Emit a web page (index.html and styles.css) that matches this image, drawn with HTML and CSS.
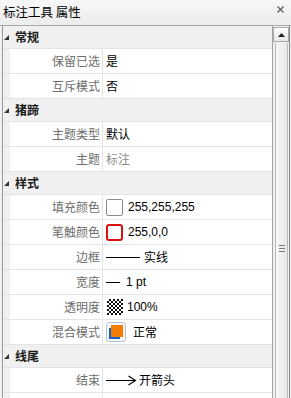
FILE: index.html
```html
<!DOCTYPE html>
<html>
<head>
<meta charset="utf-8">
<link rel="stylesheet" href="styles.css">
</head>
<body>
<div class="win">
  <div class="title">
    <span class="title-text">标注工具 属性</span>
    <svg class="close" width="7" height="7" viewBox="0 0 7 7"><path d="M0.5 0.5L6.5 6.5M6.5 0.5L0.5 6.5" stroke="#555" stroke-width="1.1" fill="none"/></svg>
  </div>
  <div class="main">
    <div class="grid">
      <div class="cat"><svg class="tri" width="5" height="5" viewBox="0 0 5 5"><polygon points="5,0 5,5 0,5" fill="#333"/></svg>常规</div>
      <div class="row"><div class="lbl">保留已选</div><div class="val">是</div></div>
      <div class="row"><div class="lbl">互斥模式</div><div class="val">否</div></div>
      <div class="cat"><svg class="tri" width="5" height="5" viewBox="0 0 5 5"><polygon points="5,0 5,5 0,5" fill="#333"/></svg>猪蹄</div>
      <div class="row"><div class="lbl">主题类型</div><div class="val">默认</div></div>
      <div class="row"><div class="lbl">主题</div><div class="val dis">标注</div></div>
      <div class="cat"><svg class="tri" width="5" height="5" viewBox="0 0 5 5"><polygon points="5,0 5,5 0,5" fill="#333"/></svg>样式</div>
      <div class="row"><div class="lbl">填充颜色</div><div class="val"><span class="sw sw-fill"></span><span class="num">255,255,255</span></div></div>
      <div class="row"><div class="lbl">笔触颜色</div><div class="val"><span class="sw sw-stroke"></span><span class="num">255,0,0</span></div></div>
      <div class="row"><div class="lbl">边框</div><div class="val"><span class="ln ln-long"></span>实线</div></div>
      <div class="row"><div class="lbl">宽度</div><div class="val"><span class="ln ln-short"></span><span class="num">1 pt</span></div></div>
      <div class="row"><div class="lbl">透明度</div><div class="val"><span class="checker"></span><span class="num">100%</span></div></div>
      <div class="row"><div class="lbl">混合模式</div><div class="val"><svg class="blend" width="20" height="20" viewBox="0 0 20 20"><rect x="0.5" y="0.5" width="19" height="19" rx="2" fill="#f3f5f8" stroke="#b9c4d2"/><rect x="3" y="6" width="11" height="11" fill="#1a62c4"/><rect x="5" y="3" width="12" height="12" fill="#f47c00"/></svg>正常</div></div>
      <div class="cat"><svg class="tri" width="5" height="5" viewBox="0 0 5 5"><polygon points="5,0 5,5 0,5" fill="#333"/></svg>线尾</div>
      <div class="row"><div class="lbl">结束</div><div class="val"><svg class="arrow" width="31" height="11" viewBox="0 0 31 11"><path d="M0 5.5H29.5M22.5 1L29.5 5.5L22.5 10" stroke="#000" stroke-width="1.1" fill="none"/></svg>开箭头</div></div>
      <div class="row"><div class="lbl"></div><div class="val"></div></div>
    </div>
    <div class="sb">
      <div class="sb-up"><svg width="7" height="4" viewBox="0 0 7 4"><polygon points="0,4 3.5,0 7,4" fill="#222"/></svg></div>
      <div class="sb-thumb"><span class="grip"></span></div>
    </div>
  </div>
</div>
</body>
</html>
```

FILE: styles.css
```css
html, body {
  margin: 0;
  padding: 0;
}
body {
  font-family: "Noto Sans CJK SC", "Noto Sans", sans-serif;
  font-size: 12px;
  color: #000;
  background: #f0f0f0;
}
.win {
  width: 291px;
  height: 398px;
  overflow: hidden;
  display: flex;
  flex-direction: column;
  background: #f0f0f0;
}
.title {
  height: 26px;
  flex: none;
  box-sizing: border-box;
  border-bottom: 1px solid #a8a8a8;
  background: linear-gradient(#f7f7f7, #ececec);
  display: flex;
  align-items: center;
  justify-content: space-between;
  padding: 0 7px 1px 3px;
  line-height: 16px;
  font-size: 12.5px;
}
.close {
  margin-top: -5px;
}
.main {
  flex: 1;
  display: flex;
  padding-left: 2px;
  min-height: 0;
}
.grid {
  width: 269px;
  border-left: 1px solid #9a9a9a;
  border-right: 1px solid #a3a3a3;
  background: #fff;
  display: flex;
  flex-direction: column;
  flex: none;
}
.cat {
  height: 23px;
  flex: none;
  box-sizing: border-box;
  border-bottom: 1px solid #e4e4e4;
  background: #f0f0f0;
  display: flex;
  align-items: center;
  padding-left: 1px;
  font-weight: 700;
  line-height: 16px;
  color: #1a1a1a;
}
.tri {
  margin-right: 6px;
  margin-top: 1px;
}
.row {
  height: 25px;
  flex: none;
  box-sizing: border-box;
  border-bottom: 1px solid #e4e4e4;
  background: linear-gradient(to right, #f0f0f0 7px, #fff 7px);
  display: flex;
  padding-left: 7px;
  line-height: 16px;
}
.lbl {
  width: 93px;
  box-sizing: border-box;
  border-right: 1px solid #e4e4e4;
  text-align: right;
  padding-right: 2px;
  color: #6d6d6d;
  display: flex;
  align-items: center;
  justify-content: flex-end;
}
.val {
  flex: 1;
  padding-left: 3px;
  display: flex;
  align-items: center;
}
.dis {
  color: #8a8a8a;
}
.num {
  font-family: "Liberation Sans", "Noto Sans CJK SC", sans-serif;
  font-size: 12px;
}
.sw {
  width: 17px;
  height: 17px;
  box-sizing: border-box;
  margin-right: 5px;
  background: #fff;
}
.sw-fill {
  border: 1px solid #8c8c8c;
  border-radius: 2px;
}
.sw-stroke {
  border: 2px solid #d81010;
  border-radius: 3px;
}
.ln {
  height: 1px;
  background: #000;
}
.ln-long {
  width: 34px;
  margin-right: 4px;
}
.ln-short {
  width: 14px;
  margin-right: 6px;
}
.checker {
  width: 16px;
  height: 16px;
  margin-left: 1px;
  margin-right: 4px;
  background: repeating-conic-gradient(#111 0 25%, #fff 0 50%) 0 0 / 4px 4px;
}
.blend {
  margin-right: 7px;
}
.arrow {
  margin-right: 2px;
}
.sb {
  width: 16px;
  flex: none;
  border-right: 1px solid #8a8a8a;
  display: flex;
  flex-direction: column;
  background: #f0f0f0;
}
.sb-up {
  height: 15px;
  margin-top: 1px;
  box-sizing: border-box;
  border: 1px solid #a8a8a8;
  background: linear-gradient(#ffffff, #e6e6e6);
  display: flex;
  align-items: center;
  justify-content: center;
}
.sb-thumb {
  flex: 1;
  margin: 1px 1px 0 2px;
  border-left: 1px solid #b8b8b8;
  border-right: 1px solid #b8b8b8;
  background: linear-gradient(to right, #f6f6f6, #e8e8e8);
  display: flex;
  justify-content: center;
  padding-top: 202px;
}
.grip {
  width: 6px;
  height: 5px;
  border-top: 1px solid #777;
  border-bottom: 1px solid #777;
  background: linear-gradient(#777, #777) 0 2px / 6px 1px no-repeat;
}
```
